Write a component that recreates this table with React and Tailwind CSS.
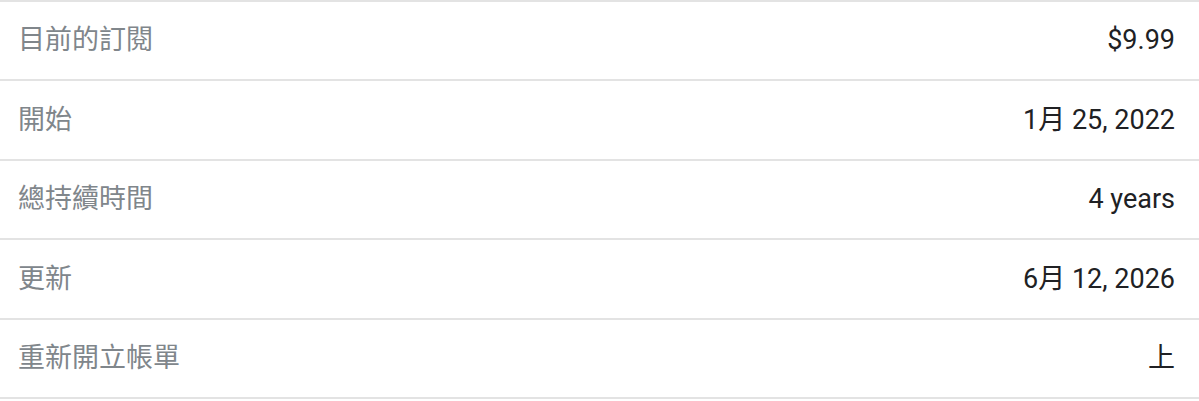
const rows = [
  { label: '目前的訂閱', value: '$9.99' },
  { label: '開始', value: '1月 25, 2022' },
  { label: '總持續時間', value: '4 years' },
  { label: '更新', value: '6月 12, 2026' },
  { label: '重新開立帳單', value: '上' },
];

export default function App() {
  return (
    <div
      className="w-[1199px] h-[401px] bg-white overflow-hidden"
      style={{ fontFamily: 'Roboto, "Noto Sans CJK TC", sans-serif' }}
    >
      <div className="border-t-2 border-[#e3e3e3]">
        {rows.map((row) => (
          <div
            key={row.label}
            className="flex items-center justify-between h-[79.4px] pl-[18px] pr-[24px] border-b-2 border-[#e3e3e3]"
          >
            <span className="text-[27px] text-[#80868b]">{row.label}</span>
            <span className="text-[27px] text-[#202124]">{row.value}</span>
          </div>
        ))}
      </div>
    </div>
  );
}
